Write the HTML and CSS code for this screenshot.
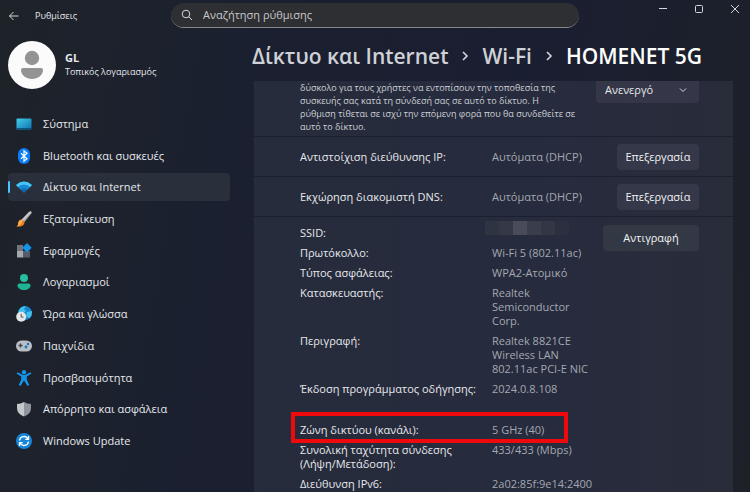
FILE: index.html
```html
<!doctype html>
<html lang="el">
<head>
    <meta charset="utf-8">
    <title>Ρυθμίσεις</title>
    <link rel="stylesheet" href="styles.css">
</head>
<body>
<header class="titlebar">
    <button class="icon-btn back" aria-label="Πίσω"><svg width="12" height="12" viewBox="0 0 12 12"><path d="M5.5 2 1.5 6l4 4M1.5 6h9"/></svg></button>
    <span class="app-name">Ρυθμίσεις</span>
    <label class="search">
        <svg width="12" height="12" viewBox="0 0 12 12"><circle cx="5" cy="5" r="3.8"/><path d="m7.8 7.8 3.2 3.2"/></svg>
        <input type="text" placeholder="Αναζήτηση ρύθμισης" aria-label="Αναζήτηση ρύθμισης">
    </label>
    <div class="window-btns">
        <button class="icon-btn" aria-label="Ελαχιστοποίηση"><svg width="10" height="10" viewBox="0 0 10 10"><path d="M1 4.5h8"/></svg></button>
        <button class="icon-btn" aria-label="Μεγιστοποίηση"><svg width="10" height="10" viewBox="0 0 10 10"><rect x="1.5" y="1.5" width="7" height="7" rx="1"/></svg></button>
        <button class="icon-btn" aria-label="Κλείσιμο"><svg width="10" height="10" viewBox="0 0 10 10"><path d="m1 1 8 8M9 1 1 9"/></svg></button>
    </div>
</header>
<div class="layout">
    <aside class="sidebar">
        <div class="user">
            <svg class="avatar" width="48" height="48" viewBox="0 0 48 48"><circle cx="24" cy="24" r="24" fill="#fbfbfb"/><circle cx="24" cy="17" r="7.2" fill="#949494"/><path d="M15 27h18q2 0 2 2c0 5-5 9-11 9s-11-4-11-9q0-2 2-2z" fill="#949494"/></svg>
            <div>
                <p class="user-name">GL</p>
                <p class="user-type">Τοπικός λογαριασμός</p>
            </div>
        </div>
        <nav class="nav">
            <a href="#"><svg width="16" height="16" viewBox="0 0 16 16"><defs><linearGradient id="sys" x2="1" y2="1"><stop stop-color="#41d0ea"/><stop offset="1" stop-color="#0f6fae"/></linearGradient></defs><rect x=".5" y="2.500" width="15" height="11" rx="1" fill="url(#sys)"/><path d="M1 12h14v.8q0 .7-.8.700H1.800q-.8 0-.8-.7z" fill="#0a547e"/></svg>Σύστημα</a>
            <a href="#"><svg width="16" height="16" viewBox="0 0 16 16"><rect x="2" y="0" width="12" height="16" rx="6" fill="#0a7cf5"/><path d="m5 5.300 6 5.400-3 2.500V2.800l3 2.500-6 5.400" fill="none" stroke="#fff" stroke-width="1.200"/></svg>Bluetooth και συσκευές</a>
            <a href="#" class="active"><svg width="16" height="16" viewBox="0 0 16 16"><path d="M0 6Q8-.8 16 6L8 14z" fill="#0c68b0"/><path d="M0 6Q8-.8 16 6l-2.200 2.200Q8 3.300 2.200 8.200z" fill="#46c6f2"/><path d="M2.200 8.200Q8 3.300 13.800 8.200l-2.600 2.600Q8 8.200 4.800 10.800z" fill="#1689d3"/></svg>Δίκτυο και Internet</a>
            <a href="#"><svg width="16" height="16" viewBox="0 0 16 16"><path d="M14.800.2q1.200.8.700 2L8.500 11 5.800 8.500 13 1z" fill="#a4a5a8"/><path d="m13 1 1.800-.8.7.800L7.500 10 5.800 8.500z" fill="#c8c9ca"/><path d="M5.600 8.500 8.500 11c0 4-4 5-8 4.600 2-1.100 1.300-2.600 2-4.600.6-1.600 2-2.300 3.100-2.500z" fill="#ee7c1b"/><path d="M5.600 8.500 7 9.800c-1 3.200-3 4.700-6.500 5.800 2-1.100 1.300-2.600 2-4.600.6-1.600 2-2.300 3.100-2.500z" fill="#ffae4e"/></svg>Εξατομίκευση</a>
            <a href="#"><svg width="16" height="16" viewBox="0 0 16 16"><path d="M1 2h6v6H1z" fill="#72777e"/><path d="M1 8h6.500v6.500H1z" fill="#a5a9af"/><path d="M7.500 8H14v6.500H7.500z" fill="#555c66"/><path d="m11 0 4.700 4.700L11 9.400 6.300 4.700z" fill="#1593e8"/></svg>Εφαρμογές</a>
            <a href="#"><svg width="16" height="16" viewBox="0 0 16 16"><circle cx="8" cy="4" r="4" fill="#28bfa1"/><path d="M3.500 9.500h9q2 0 2 2c0 2.500-3 4.500-6.500 4.500s-6.500-2-6.500-4.500q0-2 2-2z" fill="#20b394"/></svg>Λογαριασμοί</a>
            <a href="#"><svg width="16" height="16" viewBox="0 0 16 16"><circle cx="9" cy="7" r="7" fill="#1786cf"/><path d="M4 2.500C6 .5 9 0 10 .3L8 3l2 2-2 2H2.500Q2 5 4 2.500zM11 6l4.800-1q.7 4-2.300 7.300L10 10z" fill="#43bfe9"/><circle cx="5.200" cy="10.800" r="5" fill="#e3e5e7"/><path d="M5.200 7.800v3.300h2.300" fill="none" stroke="#555" stroke-width="1"/></svg>Ώρα και γλώσσα</a>
            <a href="#"><svg width="16" height="16" viewBox="0 0 16 16"><rect x="0" y="2.500" width="16" height="11" rx="5.500" fill="#b9bdc4"/><path d="M2.500 7.500h4M4.500 5.500v4" stroke="#41464f" stroke-width="1.300"/><circle cx="12" cy="6" r="1.200" fill="#1674c4"/><circle cx="10" cy="9" r="1.400" fill="#1674c4"/></svg>Παιχνίδια</a>
            <a href="#"><svg width="16" height="16" viewBox="0 0 16 16"><circle cx="8" cy="2.200" r="2.200" fill="#1593e6"/><path d="M2 2.500 7 5h2l5-2.500q1.500-.2 1.300 1.300L10.800 6.500v3.300l2.400 5q-.6 1.500-2 .8L8 10.500l-3.200 5.100q-1.500.6-2-.8l2.400-5V6.500L.7 3.800Q.6 2.200 2 2.500z" fill="#1593e6"/></svg>Προσβασιμότητα</a>
            <a href="#"><svg width="16" height="16" viewBox="0 0 16 16"><path d="M8 1Q5 3 1 3v4q0 6 7 8.500V1z" fill="#c5c8cb"/><path d="M8 1q3 2 7 2v4q0 6-7 8.500z" fill="#90969d"/></svg>Απόρρητο και ασφάλεια</a>
            <a href="#"><svg width="16" height="16" viewBox="0 0 16 16"><circle cx="8" cy="8" r="8" fill="#1685d8"/><path d="M3.500 7.500A4.500 4.500 0 0 1 12 6M12.500 3v3.300H9.200M12.500 8.500A4.500 4.500 0 0 1 4 10M3.500 13V9.700h3.300" fill="none" stroke="#fff" stroke-width="1.300"/></svg>Windows Update</a>
        </nav>
    </aside>
    <main class="main">
        <h1 class="crumbs">
            <a href="#">Δίκτυο και Internet</a>
            <svg width="8" height="12" viewBox="0 0 8 12"><path d="m2 2 4 4-4 4"/></svg>
            <a href="#">Wi-Fi</a>
            <svg width="8" height="12" viewBox="0 0 8 12"><path d="m2 2 4 4-4 4"/></svg>
            <span>HOMENET 5G</span>
        </h1>
        <div class="scroller">
            <section class="card random-mac">
                <label class="hint" for="mac">δύσκολο για τους χρήστες να εντοπίσουν την τοποθεσία της<br>
                    συσκευής σας κατά τη σύνδεσή σας σε αυτό το δίκτυο. Η<br>
                    ρύθμιση τίθεται σε ισχύ την επόμενη φορά που θα συνδεθείτε σε<br>
                    αυτό το δίκτυο.</label>
                <div class="select">
                    <select id="mac"><option>Ανενεργό</option></select>
                    <svg width="8" height="8" viewBox="0 0 8 8"><path d="m1 2.500 3 3 3-3"/></svg>
                </div>
            </section>
            <section class="card setting">
                <span class="label">Αντιστοίχιση διεύθυνσης IP:</span>
                <span class="value">Αυτόματα (DHCP)</span>
                <button class="btn">Επεξεργασία</button>
            </section>
            <section class="card setting">
                <span class="label">Εκχώρηση διακομιστή DNS:</span>
                <span class="value">Αυτόματα (DHCP)</span>
                <button class="btn">Επεξεργασία</button>
            </section>
            <section class="card details">
                <dl>
                    <div class="row"><dt>SSID:</dt><dd class="masked"><i></i><i></i><i></i><i></i><i></i><i></i></dd></div>
                    <div class="row"><dt>Πρωτόκολλο:</dt><dd>Wi-Fi 5 (802.11ac)</dd></div>
                    <div class="row"><dt>Τύπος ασφάλειας:</dt><dd>WPA2-Ατομικό</dd></div>
                    <div class="row"><dt>Κατασκευαστής:</dt><dd>Realtek Semiconductor Corp.</dd></div>
                    <div class="row"><dt>Περιγραφή:</dt><dd>Realtek 8821CE Wireless LAN 802.11ac PCI-E NIC</dd></div>
                    <div class="row"><dt>Έκδοση προγράμματος οδήγησης:</dt><dd>2024.0.8.108</dd></div>
                    <div class="row marked"><dt>Ζώνη δικτύου (κανάλι):</dt><dd>5 GHz (40)</dd></div>
                    <div class="row"><dt>Συνολική ταχύτητα σύνδεσης (Λήψη/Μετάδοση):</dt><dd>433/433 (Mbps)</dd></div>
                    <div class="row"><dt>Διεύθυνση IPv6:</dt><dd>2a02:85f:9e14:2400</dd></div>
                </dl>
                <button class="btn btn-copy">Αντιγραφή</button>
            </section>
        </div>
    </main>
</div>
</body>
</html>
```
FILE: styles.css
```css
*{margin:0; padding:0; box-sizing:border-box;}
body{
    display:flex;
    flex-direction:column;
    height:100vh;
    overflow:hidden;
    font:11px/14px "Open Sans","Noto Sans",sans-serif;
    color:#e6e8ec;
    background:linear-gradient(100deg,#1e2329 0%,#1b2030 30%,#1a1e31 65%,#1d2128 100%);
}
a{color:inherit; text-decoration:none;}
button,input,select{font:inherit; color:inherit; border:0; background:none;}
svg{flex:none;}

/* title bar */
.titlebar{
    display:flex;
    align-items:center;
    height:31px;
    padding:0 8px;
}
.icon-btn{display:flex;}
.icon-btn svg,.search svg,.crumbs svg,.select svg{
    fill:none;
    stroke:#d5d7da;
}
.app-name{
    width:136px;
    margin-left:15px;
    font-size:9px;
}
.search{
    display:flex;
    align-items:center;
    flex:0 1 408px;
    height:25px;
    padding:0 10px;
    gap:10px;
    border-bottom:1px solid #85878b;
    border-radius:13px;
    background:#2e2f32;
}
.search input{flex:1; min-width:0; outline:0;}
.search input::placeholder{color:#c8c9cb; opacity:1;}
.window-btns{
    display:flex;
    align-self:flex-start;
    gap:26px;
    margin-left:auto;
    padding:4px 2px 0 0;
}

.layout{display:flex; flex:1; min-height:0;}

/* sidebar */
.sidebar{
    display:flex;
    flex-direction:column;
    flex:0 0 230px;
    padding:10px 0 37px 8px;
}
.user{display:flex; align-items:center; gap:9px;}
.user-name{font-size:11px; font-weight:700;}
.user-type{font-size:9px;}
.nav{
    display:flex;
    flex:1;
    flex-direction:column;
    justify-content:space-between;
    padding-top:21px;
}
.nav a{
    display:flex;
    align-items:center;
    gap:11px;
    height:28px;
    padding-left:8px;
    border-radius:4px;
}
.nav .active{
    position:relative;
    background:#2a303b;
}
.active::before{
    content:"";
    position:absolute;
    left:0;
    top:8px;
    width:2px;
    height:12px;
    border-radius:1px;
    background:#4cc2ff;
}

/* content */
.main{
    display:flex;
    flex:1;
    flex-direction:column;
    min-width:0;
    padding:10px 17px 0 24px;
}
.crumbs{
    display:flex;
    align-items:center;
    gap:13px;
    height:30px;
    margin:0 0 10px -2px;
    font-size:21px;
    line-height:30px;
    font-weight:600;
    white-space:nowrap;
    color:#fff;
}
.crumbs a{color:#cfd1d6;}
.crumbs svg{stroke-width:1.6;}
.scroller{flex:1; min-height:0; overflow:hidden;}
.card{
    display:flex;
    align-items:center;
    padding:0 34px 0 46px;
    border-bottom:1px solid #1b2030;
    background:linear-gradient(90deg,#262c3b,#262b3e 60%,#292c39);
}
.random-mac{
    align-items:flex-start;
    justify-content:space-between;
    height:56px;
}
.hint{
    font-size:9px;
    line-height:13px;
    color:#cdd0d6;
}
.select{
    display:flex;
    align-items:center;
    flex:none;
    width:103px;
    height:26px;
    margin-top:-4px;
    padding:0 12px 0 9px;
    border-radius:4px;
    background:#353748;
}
.select select{flex:1; appearance:none; outline:0;}
.setting{height:40px;}
.label{width:192px;}
.value,dd{color:#a4a8b1;}
.btn{
    height:26px;
    min-width:82px;
    margin-left:auto;
    border-radius:4px;
    background:#353848;
    color:#f2f3f5;
}
.btn-copy{
    width:96px;
    background:#333944;
}
.details{
    align-items:flex-start;
    padding-top:6px;
    border-bottom:0;
}
.details .btn{margin-top:2px;}
.row{
    display:grid;
    grid-template-columns:192px 100px;
    padding:3px 0;
}
dt{padding-right:12px;}
.masked{
    display:flex;
    height:14px;
    margin:-5px 0 0 -7px;
}
.masked i{width:14px; background:#2f3443;}
.masked i:nth-child(2){background:#343847;}
.masked i:nth-child(3){background:#4a4b5a;}
.masked i:nth-child(4){background:#3a3d4c;}
.masked i:nth-child(5){background:#323645;}
.masked i:nth-child(6){background:#2b3040;}
.marked{
    position:relative;
    margin-top:21px;
}
.marked::after{
    content:"";
    position:absolute;
    inset:-8px 24px -3px -9px;
    border:4px solid #ee0a0c;
}
```
